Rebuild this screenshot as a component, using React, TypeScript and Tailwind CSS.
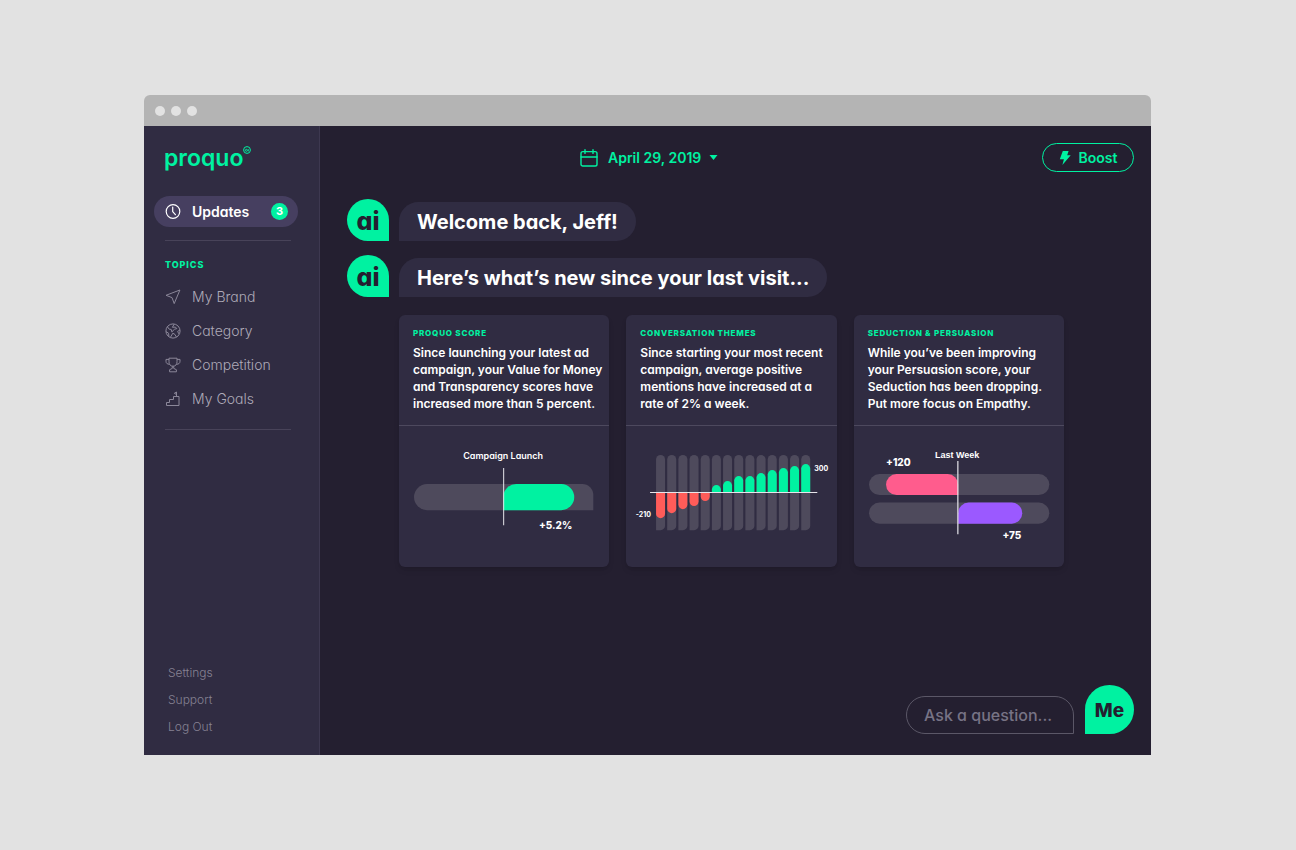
import type { ReactNode } from "react";

const ICON = "size-4 shrink-0 fill-none stroke-current";

function ClockIcon() {
  return (
    <svg className={ICON} viewBox="0 0 16 16" strokeWidth="1.2" strokeLinecap="round" strokeLinejoin="round" aria-hidden="true">
      <circle cx="8" cy="7.5" r="6.8" />
      <path d="M7.700 3v4.700l2.700 3" />
    </svg>
  );
}

function BrandIcon() {
  return (
    <svg className={ICON} viewBox="0 0 16 16" strokeWidth="1" strokeLinejoin="round" aria-hidden="true">
      <path d="M14.900 1 1 6.300l6 2.300 2.200 6z" />
    </svg>
  );
}

function CategoryIcon() {
  return (
    <svg className={ICON} viewBox="0 0 16 16" strokeWidth="1" strokeLinejoin="round" aria-hidden="true">
      <circle cx="8" cy="8" r="7.100" />
      <path d="M2.400 3.700 4.200 6.200l2 .2.600 2.500 2.800-2.700 2.200-.6-1.400-1.500-3 .2 1.800-3.200" />
      <path d="M1 8.700l2.600 1.500.3 3.100M5.300 14.500l2.500-4.300 2.100 1.200 1.500 2.700M14.900 7l-2.300 1.400 1.300 2.500" />
    </svg>
  );
}

function CompetitionIcon() {
  return (
    <svg className={ICON} viewBox="0 0 16 16" strokeWidth="1" strokeLinejoin="round" aria-hidden="true">
      <path d="M4 1.200h8v3.600c0 2.600-1.400 4.400-4 4.400S4 7.400 4 4.800z" />
      <path d="M4 2.400H1v1.900c0 1.900 1.200 2.900 3.500 3M12 2.400h3v1.900c0 1.900-1.200 2.900-3.500 3" />
      <path d="M7.300 9.200v2.200L4.600 12.700v2.100h6.800v-2.100L8.700 11.400V9.200" />
    </svg>
  );
}

function GoalsIcon() {
  return (
    <svg className={ICON} viewBox="0 0 16 16" strokeWidth="1" strokeLinejoin="round" aria-hidden="true">
      <path d="M1.500 14.500v-3h3v-3h4v-3h5.500v9z" />
      <path d="M11.500 5.500V1L9.300 2.300l2.200 1.200" />
    </svg>
  );
}

function CalendarIcon() {
  return (
    <svg className="h-[18px] w-[18px] fill-none stroke-current" viewBox="0 0 18 18" strokeWidth="1.4" strokeLinecap="round" aria-hidden="true">
      <rect x="1" y="2.600" width="16" height="14.400" rx="1.800" />
      <path d="M1 8h16M5 .8v3.600M13 .8v3.600" />
    </svg>
  );
}

function BoltIcon() {
  return (
    <svg className="h-[14px] w-3 fill-current" viewBox="0 0 12 14" aria-hidden="true">
      <path d="M3.800 0h5.800L8.200 4.300h3.500L3.400 14l1.500-5.800H.8z" />
    </svg>
  );
}

function Logo() {
  return (
    <a href="#home" className="ml-[10px] flex h-8 items-start text-[#00f2a1]">
      <span className="text-[23px] leading-7 font-semibold">proquo</span>
      <svg className="mt-[2px] size-2 shrink-0" viewBox="0 0 8 8" aria-hidden="true">
        <circle cx="4" cy="4" r="3.400" fill="none" stroke="currentColor" strokeWidth="1" />
        <circle cx="3.400" cy="4.300" r="1" fill="none" stroke="currentColor" strokeWidth="0.900" />
        <path d="M5.300 3.200v2.200" stroke="currentColor" strokeWidth="0.900" />
      </svg>
    </a>
  );
}

const topics = [
  { name: "My Brand", icon: <BrandIcon /> },
  { name: "Category", icon: <CategoryIcon /> },
  { name: "Competition", icon: <CompetitionIcon /> },
  { name: "My Goals", icon: <GoalsIcon /> },
];

function Sidebar() {
  return (
    <aside className="flex w-[176px] shrink-0 flex-col border-r border-[#3d3850] bg-[#302c42] pr-[21px] pb-[15px] pl-[10px]">
      <div className="pt-[18px]">
        <Logo />
      </div>
      <nav className="mt-5">
        <a href="#updates" className="flex h-[31px] items-center rounded-full bg-[#463f60] pr-[10px] pl-[11px] text-white">
          <ClockIcon />
          <span className="ml-[11px] text-sm font-semibold">Updates</span>
          <span className="ml-auto flex size-[17px] items-center justify-center rounded-full bg-[#00f2a1] text-[11px] font-bold">
            3
          </span>
        </a>
        <hr className="mt-[13px] mr-[7px] ml-[11px] border-[#484359]" />
        <h2 className="mt-[17px] ml-[11px] text-[9px] leading-[14px] font-extrabold tracking-widest text-[#00f2a1]">
          TOPICS
        </h2>
        <ul className="mt-2">
          {topics.map((topic) => (
            <li key={topic.name}>
              <a href="#topic" className="flex h-[34px] items-center gap-[11px] pl-[11px] text-sm font-light text-[#aeaab8]">
                <span className="text-[#8b8799]">{topic.icon}</span>
                {topic.name}
              </a>
            </li>
          ))}
        </ul>
        <hr className="mt-[13px] mr-[7px] ml-[11px] border-[#484359]" />
      </nav>
      <ul className="mt-auto pl-[14px] text-xs font-light text-[#868293]">
        {["Settings", "Support", "Log Out"].map((label) => (
          <li key={label}>
            <a href="#account" className="flex h-[27px] items-center">
              {label}
            </a>
          </li>
        ))}
      </ul>
    </aside>
  );
}

function Message({ children }: { children: ReactNode }) {
  return (
    <div className="flex items-end gap-[10px]">
      <div className="flex size-[42px] items-center justify-center rounded-full rounded-br-none bg-[#00f2a1] pt-1 text-[25px] font-extrabold text-[#241f30]">
        ai
      </div>
      <p className="flex h-[39px] items-center rounded-[20px] rounded-bl-none bg-[#302c42] px-[18px] text-xl font-bold text-white">
        {children}
      </p>
    </div>
  );
}

function Card({ title, lines, children }: { title: string; lines: string[]; children: ReactNode }) {
  return (
    <article className="rounded-md bg-[#302c42] shadow-md">
      <header className="border-b border-[#4d495e] px-[14px] pt-3 pb-[13px]">
        <h3 className="text-[8px] leading-3 font-extrabold tracking-widest text-[#00f2a1]">{title}</h3>
        <p className="mt-[5px] text-xs leading-[17px] font-semibold whitespace-nowrap text-white">
          {lines.map((line) => (
            <span key={line} className="block">
              {line}
            </span>
          ))}
        </p>
      </header>
      <svg className="block w-full fill-white" viewBox="0 0 210 141">
        {children}
      </svg>
    </article>
  );
}

function ScoreChart() {
  return (
    <>
      <text x="104" y="33" textAnchor="middle" className="text-[9px] font-semibold">Campaign Launch</text>
      <path d="M28 58H183a11 11 0 0 1 11 11V84H28a13 13 0 0 1 0-26z" fill="#4e4a5c" />
      <path d="M104 84V71a13 13 0 0 1 13-13h45a13 13 0 0 1 0 26z" fill="#00f2a1" />
      <path d="M104.500 42v57" stroke="#e6e5ea" strokeWidth="1" />
      <text x="173" y="103" textAnchor="end" className="text-[10px] font-extrabold">+5.2%</text>
    </>
  );
}

// Negative values hang below the axis
const themes = [-25, -20, -16, -13, -8, 8, 12, 17, 17, 20, 23, 25, 27, 29];

function ThemesChart() {
  return (
    <>
      {themes.map((value, i) => {
        const x = 30 + i * 11.15;
        return (
          <g key={i} transform={`translate(${x} 0)`}>
            <path d="M0 104V33.500a4.500 4.500 0 0 1 9 0V99.500a4.500 4.500 0 0 1-4.500 4.500z" fill="#4e4a5c" />
            {value < 0 ? (
              <path d={`M0 67H9V${62.5 - value}a4.500 4.500 0 0 1-9 0z`} fill="#ff5c59" />
            ) : (
              <path d={`M0 67V${71.5 - value}a4.500 4.500 0 0 1 9 0V67z`} fill="#00f2a1" />
            )}
          </g>
        );
      })}
      <path d="M24 66.500h167" stroke="#e6e5ea" strokeWidth="1" />
      <text x="188" y="45" className="text-[7px] font-bold">300</text>
      <text x="25" y="91" textAnchor="end" className="text-[7px] font-bold">-210</text>
    </>
  );
}

function PersuasionChart() {
  return (
    <>
      <text x="103" y="32" textAnchor="middle" className="font-['Liberation_Sans',sans-serif] text-[9px] font-bold">Last Week</text>
      <text x="32" y="40" className="text-[10px] font-extrabold">+120</text>
      <rect x="15" y="48" width="180" height="21" rx="10.500" fill="#4e4a5c" />
      <rect x="15" y="76.500" width="180" height="21" rx="10.500" fill="#4e4a5c" />
      <path d="M104 69H42.500a10.500 10.500 0 0 1 0-21H93.500A10.500 10.500 0 0 1 104 58.500z" fill="#ff5c8d" />
      <path d="M104 97.500V87a10.500 10.500 0 0 1 10.500-10.500h43a10.500 10.500 0 0 1 0 21z" fill="#9b59ff" />
      <path d="M103.700 35v73" stroke="#e6e5ea" strokeWidth="1.200" />
      <text x="167" y="113" textAnchor="end" className="text-[10px] font-extrabold">+75</text>
    </>
  );
}

export default function App() {
  return (
    <div className="flex min-h-screen flex-col bg-[#e2e2e2] py-[95px] pr-[145px] pl-36 font-['Inter','Liberation_Sans',sans-serif] [font-feature-settings:'cv11']">
      <div className="flex flex-1 flex-col overflow-hidden rounded-t-md">
        <div className="flex h-[31px] items-center gap-[6px] bg-[#b4b4b4] pl-[11px]">
          <span className="size-[10px] rounded-full bg-[#e2e2e2]" />
          <span className="size-[10px] rounded-full bg-[#e2e2e2]" />
          <span className="size-[10px] rounded-full bg-[#e2e2e2]" />
        </div>
        <div className="flex flex-1">
          <Sidebar />
          <main className="flex flex-1 flex-col bg-[#241f30] pt-[17px] pr-[17px] pb-[21px] pl-[27px]">
            <div className="flex items-center justify-between pl-[233px] text-[#00f2a1]">
              <button type="button" className="flex items-center text-sm font-semibold">
                <CalendarIcon />
                <span className="ml-[10px]">April 29, 2019</span>
                <svg className="ml-2 h-[5px] w-[9px] fill-current" viewBox="0 0 9 5" aria-hidden="true">
                  <path d="M.5 0h8L4.500 5z" />
                </svg>
              </button>
              <button type="button" className="flex h-[29px] w-[92px] items-center justify-center gap-2 rounded-full border border-[#00f2a1] text-sm font-semibold">
                <BoltIcon />
                Boost
              </button>
            </div>
            <section className="mt-[27px] flex flex-col gap-[14px]">
              <Message>Welcome back, Jeff!</Message>
              <Message>Here’s what’s new since your last visit...</Message>
            </section>
            <section className="mt-[18px] mr-[70px] ml-[52px] grid grid-cols-3 gap-[17px]">
              <Card
                title="PROQUO SCORE"
                lines={[
                  "Since launching your latest ad",
                  "campaign, your Value for Money",
                  "and Transparency scores have",
                  "increased more than 5 percent.",
                ]}
              >
                <ScoreChart />
              </Card>
              <Card
                title="CONVERSATION THEMES"
                lines={[
                  "Since starting your most recent",
                  "campaign, average positive",
                  "mentions have increased at a",
                  "rate of 2% a week.",
                ]}
              >
                <ThemesChart />
              </Card>
              <Card
                title="SEDUCTION & PERSUASION"
                lines={[
                  "While you’ve been improving",
                  "your Persuasion score, your",
                  "Seduction has been dropping.",
                  "Put more focus on Empathy.",
                ]}
              >
                <PersuasionChart />
              </Card>
            </section>
            <form className="mt-auto flex items-end justify-end gap-[11px]">
              <input
                type="text"
                aria-label="Ask a question"
                placeholder="Ask a question..."
                className="h-[38px] w-[168px] rounded-[19px] rounded-br-none border border-[#5b5767] bg-transparent px-[17px] text-base font-medium text-white placeholder:text-[#777385]"
              />
              <button type="button" className="size-[49px] rounded-full rounded-bl-none bg-[#00f2a1] pt-1 text-[19px] font-extrabold text-[#241f30]">
                Me
              </button>
            </form>
          </main>
        </div>
      </div>
    </div>
  );
}
